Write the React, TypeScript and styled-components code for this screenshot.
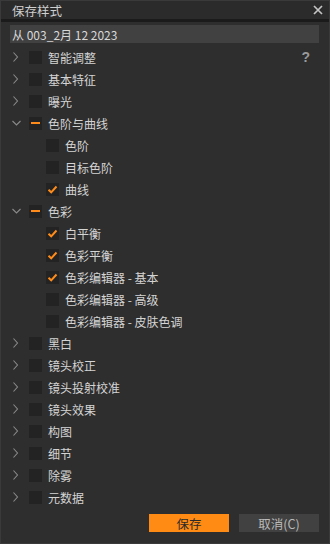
import React from 'react';
import styled, { createGlobalStyle } from 'styled-components';

const Global = createGlobalStyle`
  html, body { margin: 0; padding: 0; background: #2e2e2e; }
  body { font-family: "Noto Sans CJK SC", "Noto Sans", sans-serif; }
`;

const Window = styled.div`
  width: 330px;
  height: 544px;
  box-sizing: border-box;
  background: #2e2e2e;
  border: 1px solid #3a3a3a;
  display: flex;
  flex-direction: column;
  color: #d2d2d2;
  font-size: 12px;
`;

const TitleBar = styled.div`
  height: 18px;
  display: flex;
  align-items: center;
  justify-content: space-between;
  padding: 0 6px 0 11px;
  background: #2b2b2b;
  border-bottom: 3px solid #1b1b1b;
  font-size: 12.5px;
  color: #cfcfcf;
`;

const Close = styled.svg`
  width: 10px;
  height: 10px;
`;

const Body = styled.div`
  flex: 1;
  display: flex;
  flex-direction: column;
  padding: 3px 10px 0 9px;
`;

const SourceField = styled.div`
  height: 18px;
  background: #414141;
  display: flex;
  align-items: center;
  padding-left: 2px;
  font-size: 12px;
  color: #d8d8d8;
`;

const Tree = styled.div`
  margin-top: 3px;
  position: relative;
`;

const Help = styled.div`
  position: absolute;
  right: 9px;
  top: 3px;
  font-family: "Liberation Sans", sans-serif;
  font-weight: bold;
  font-size: 14px;
  color: #9a9a9a;
`;

const Row = styled.div<{ $child?: boolean }>`
  height: 22px;
  display: flex;
  align-items: center;
  padding-left: ${(p) => (p.$child ? '36px' : '0')};
`;

const Toggle = styled.div`
  width: 17px;
  padding-left: 2px;
  display: flex;
  align-items: center;
`;

const Box = styled.div`
  width: 13px;
  height: 13px;
  background: #232323;
  display: flex;
  align-items: center;
  justify-content: center;
  margin-right: 6px;
`;

const Dash = styled.div`
  width: 9px;
  height: 2px;
  background: #ff8c1a;
`;

const Label = styled.span`
  color: #d4d4d4;
  white-space: nowrap;
`;

const Footer = styled.div`
  display: flex;
  justify-content: flex-end;
  gap: 10px;
  margin-top: 6px;
`;

const Button = styled.div<{ $primary?: boolean }>`
  width: 80px;
  height: 18px;
  display: flex;
  align-items: center;
  justify-content: center;
  background: ${(p) => (p.$primary ? '#ff8a14' : '#414141')};
  color: ${(p) => (p.$primary ? '#2a2a2a' : '#b9b9b9')};
  font-size: 12.5px;
`;

type State = 'off' | 'on' | 'mixed';
type Item = { label: string; state: State; open?: boolean; children?: { label: string; state: State }[] };

const items: Item[] = [
  { label: '智能调整', state: 'off' },
  { label: '基本特征', state: 'off' },
  { label: '曝光', state: 'off' },
  {
    label: '色阶与曲线', state: 'mixed', open: true,
    children: [
      { label: '色阶', state: 'off' },
      { label: '目标色阶', state: 'off' },
      { label: '曲线', state: 'on' },
    ],
  },
  {
    label: '色彩', state: 'mixed', open: true,
    children: [
      { label: '白平衡', state: 'on' },
      { label: '色彩平衡', state: 'on' },
      { label: '色彩编辑器 - 基本', state: 'on' },
      { label: '色彩编辑器 - 高级', state: 'off' },
      { label: '色彩编辑器 - 皮肤色调', state: 'off' },
    ],
  },
  { label: '黑白', state: 'off' },
  { label: '镜头校正', state: 'off' },
  { label: '镜头投射校准', state: 'off' },
  { label: '镜头效果', state: 'off' },
  { label: '构图', state: 'off' },
  { label: '细节', state: 'off' },
  { label: '除雾', state: 'off' },
  { label: '元数据', state: 'off' },
];

const Chevron = ({ open }: { open?: boolean }) => (
  <svg width="10" height="10" viewBox="0 0 10 10">
    {open ? (
      <path d="M0.5 3 L4.5 7 L8.5 3" fill="none" stroke="#8a8a8a" strokeWidth="1.1" />
    ) : (
      <path d="M1.5 0.5 L5.5 5 L1.5 9.5" fill="none" stroke="#8a8a8a" strokeWidth="1.1" />
    )}
  </svg>
);

const Check = ({ state }: { state: State }) => (
  <Box>
    {state === 'mixed' && <Dash />}
    {state === 'on' && (
      <svg width="11" height="11" viewBox="0 0 11 11">
        <path d="M1.5 5.8 L4.2 8.3 L9.5 2.5" fill="none" stroke="#ff8c1a" strokeWidth="2" />
      </svg>
    )}
  </Box>
);

export default function App() {
  return (
    <>
      <Global />
      <Window>
        <TitleBar>
          <span>保存样式</span>
          <Close viewBox="0 0 10 10">
            <path d="M1 1 L9 9 M9 1 L1 9" stroke="#c4c4c4" strokeWidth="1.7" />
          </Close>
        </TitleBar>
        <Body>
          <SourceField>从 003_2月 12 2023</SourceField>
          <Tree>
            <Help>?</Help>
            {items.map((it) => (
              <React.Fragment key={it.label}>
                <Row>
                  <Toggle>
                    <Chevron open={it.open} />
                  </Toggle>
                  <Check state={it.state} />
                  <Label>{it.label}</Label>
                </Row>
                {it.open &&
                  it.children?.map((c) => (
                    <Row $child key={c.label}>
                      <Check state={c.state} />
                      <Label>{c.label}</Label>
                    </Row>
                  ))}
              </React.Fragment>
            ))}
          </Tree>
          <Footer>
            <Button $primary>保存</Button>
            <Button>取消(C)</Button>
          </Footer>
        </Body>
      </Window>
    </>
  );
}
